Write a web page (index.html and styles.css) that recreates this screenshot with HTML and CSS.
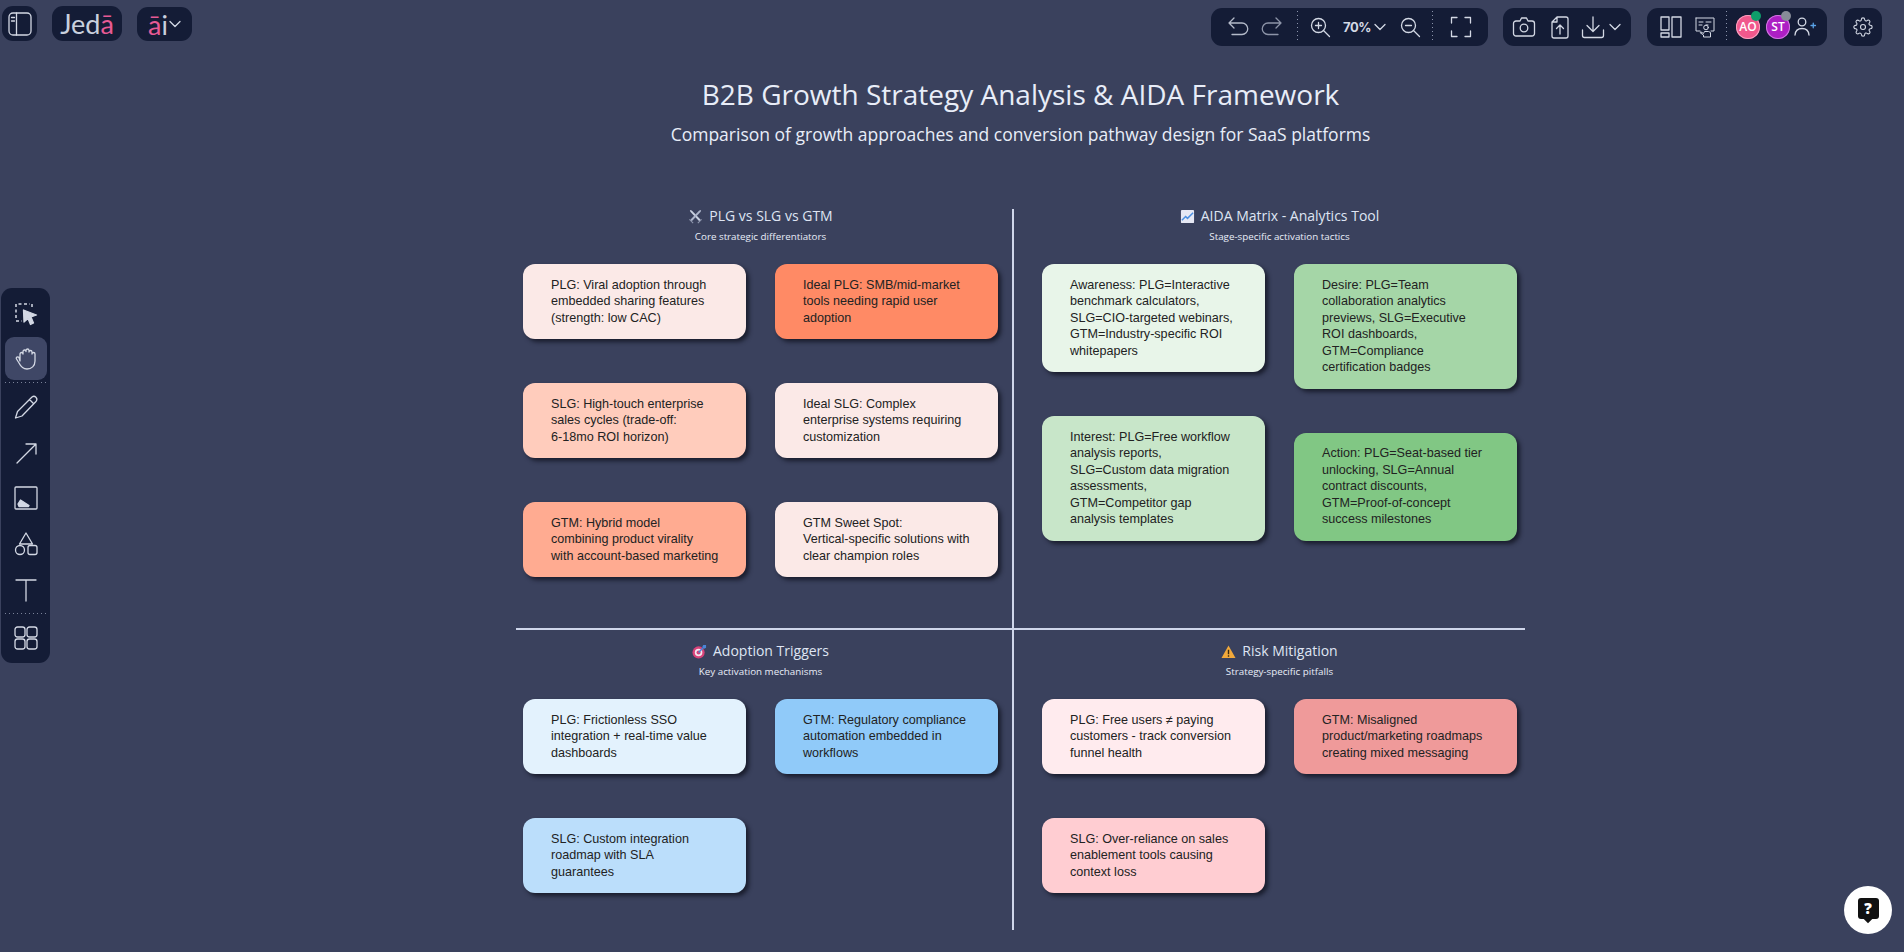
FILE: index.html
```html
<!DOCTYPE html>
<html lang="en">
<head>
<meta charset="utf-8">
<title>B2B Growth Strategy Analysis &amp; AIDA Framework</title>
<link rel="stylesheet" href="styles.css">
</head>
<body>
<svg class="defs" width="0" height="0" aria-hidden="true">
  <symbol id="chev" viewBox="0 0 14 14"><path d="M2 4.500 7 9.500 12 4.500"/></symbol>
</svg>

<header class="topbar">
  <div class="bar-left">
    <button class="panel sq">
      <svg class="icon ic-26" viewBox="0 0 26 26"><rect x="2" y="2" width="22" height="22" rx="4"/><path d="M9.500 2v22M4.500 6.500h3M4.500 10h3"/></svg>
    </button>
    <div class="panel logo">Jed<span class="pink">ā</span></div>
    <div class="panel logo-ai"><span class="pink">ā</span>i<svg class="icon chev" viewBox="0 0 14 14"><use href="#chev"/></svg></div>
  </div>
  <div class="bar-right">
    <div class="panel tools zoom-panel">
      <svg class="icon soft ml15" viewBox="0 0 24 24"><path d="M8 3 3 8l5 5M3 8h13a5 5 0 0 1 0 11.500H6"/></svg>
      <svg class="icon dim ml10" viewBox="0 0 24 24"><path d="M16 3l5 5-5 5M21 8H8a5 5 0 0 0 0 11.500h10"/></svg>
      <i class="vsep ml13"></i>
      <svg class="icon ml10" viewBox="0 0 24 24"><circle cx="10.500" cy="10.500" r="7"/><path d="M15.500 15.500l6 6M10.500 7.500v6M7.500 10.500h6"/></svg>
      <span class="zoom-val">70%</span>
      <svg class="icon chev ml4" viewBox="0 0 14 14"><use href="#chev"/></svg>
      <svg class="icon ml11" viewBox="0 0 24 24"><circle cx="10.500" cy="10.500" r="7"/><path d="M15.500 15.500l6 6M7.500 10.500h6"/></svg>
      <i class="vsep ml10"></i>
      <svg class="icon ml16" viewBox="0 0 24 24"><path d="M8 2.500H2.500V8M16 2.500h5.500V8M2.500 16v5.500H8M21.500 16v5.500H16"/></svg>
    </div>
    <div class="panel tools">
      <svg class="icon ml9" viewBox="0 0 24 24"><path d="M8 6l1.500-3h5L16 6h4a2.500 2.500 0 0 1 2.500 2.500v10A2.500 2.500 0 0 1 20 21H4a2.500 2.500 0 0 1-2.500-2.500v-10A2.500 2.500 0 0 1 4 6z"/><circle cx="12" cy="13" r="3.800"/></svg>
      <svg class="icon ml12" viewBox="0 0 24 24"><path d="M9 2h9a2 2 0 0 1 2 2v17a2 2 0 0 1-2 2H6a2 2 0 0 1-2-2V7zM9 2v5H4M12 19v-9M8.500 13.500 12 10l3.500 3.500"/></svg>
      <svg class="icon ml9" viewBox="0 0 24 24"><path d="M12 2v14M6 10.500l6 6 6-6M1.500 15v5.500a2 2 0 0 0 2 2h17a2 2 0 0 0 2-2V15"/></svg>
      <svg class="icon chev ml3" viewBox="0 0 14 14"><use href="#chev"/></svg>
    </div>
    <div class="panel tools">
      <svg class="icon ml12" viewBox="0 0 24 24"><rect x="2" y="2" width="8" height="13"/><rect x="2" y="18" width="8" height="4"/><rect x="13" y="2" width="9" height="20"/></svg>
      <svg class="icon thin ml10" viewBox="0 0 24 24"><path d="M3 3h18v13h-3M3 3v13h4M6 7h4M6 10h3M13 7h5M13 10h2"/><circle cx="13" cy="12.500" r="2.300"/><path d="M8 17l2.500 1.500 1-2h4l2 1V22h-7v-2l-3-2z"/></svg>
      <i class="vsep ml9"></i>
      <span class="avatar av-pink ml9">AO<b class="dot dot-green"></b></span>
      <span class="avatar av-purple ml6">ST<b class="dot dot-grey"></b></span>
      <svg class="icon ml3" viewBox="0 0 24 24"><circle cx="9" cy="7" r="3.800"/><path d="M2 20c.4-4.500 3.200-6.500 7-6.500s6.600 2 7 6.500"/><path class="blue" d="M18 10.500h4.500M20.250 8.250v4.500"/></svg>
    </div>
    <div class="panel tools gear-panel">
      <svg class="icon" viewBox="0 0 24 24"><circle cx="12" cy="12" r="3"/><path d="M19.400 15a1.650 1.650 0 0 0 .33 1.820l.06.06a2 2 0 0 1 0 2.830 2 2 0 0 1-2.830 0l-.06-.06a1.650 1.650 0 0 0-1.820-.33 1.650 1.650 0 0 0-1 1.510V21a2 2 0 0 1-2 2 2 2 0 0 1-2-2v-.09A1.650 1.650 0 0 0 9 19.400a1.650 1.650 0 0 0-1.820.33l-.06.06a2 2 0 0 1-2.830 0 2 2 0 0 1 0-2.830l.06-.06a1.650 1.650 0 0 0 .33-1.820 1.650 1.650 0 0 0-1.510-1H3a2 2 0 0 1-2-2 2 2 0 0 1 2-2h.09A1.650 1.650 0 0 0 4.600 9a1.650 1.650 0 0 0-.33-1.820l-.06-.06a2 2 0 0 1 0-2.830 2 2 0 0 1 2.830 0l.06.06a1.650 1.650 0 0 0 1.820.33H9a1.650 1.650 0 0 0 1-1.510V3a2 2 0 0 1 2-2 2 2 0 0 1 2 2v.09a1.650 1.650 0 0 0 1 1.510 1.650 1.650 0 0 0 1.820-.33l.06-.06a2 2 0 0 1 2.830 0 2 2 0 0 1 0 2.830l-.06.06a1.650 1.650 0 0 0-.33 1.820V9a1.650 1.650 0 0 0 1.510 1H21a2 2 0 0 1 2 2 2 2 0 0 1-2 2h-.09a1.650 1.650 0 0 0-1.510 1z"/></svg>
    </div>
  </div>
</header>

<nav class="sidebar">
  <button class="tool"><svg class="icon ic-26" viewBox="0 0 26 26"><path class="dash" d="M3 18V4h14M3 21h6"/><path class="dash" d="M19 4v3"/><path class="fill" d="M10.500 10l13 5-5.500 2 2.500 6-3 1.500-2.500-6-4 3.500z"/></svg></button>
  <button class="tool active"><svg class="icon ic-26" viewBox="0 0 26 26"><path d="M7 16V9a1.500 1.500 0 0 1 3 0V6.500a1.500 1.500 0 0 1 3 0V5.500a1.500 1.500 0 0 1 3 0V7a1.500 1.500 0 0 1 3 0v2a1.500 1.500 0 0 1 3 0v7c0 5-3.500 8-8 8-4 0-6-2-8-6l-2.500-4c-1-1.500 1.300-3 2.500-1.500z"/></svg></button>
  <i class="hsep"></i>
  <button class="tool"><svg class="icon ic-26" viewBox="0 0 26 26"><path d="M19 3a3 3 0 0 1 4.200 4.200L9 22l-6.500 2L4.500 17.500zM16.500 5.500l4.200 4.200"/></svg></button>
  <button class="tool"><svg class="icon ic-26" viewBox="0 0 26 26"><path d="M4 23 23 4M13 4h10v10"/></svg></button>
  <button class="tool"><svg class="icon ic-26" viewBox="0 0 26 26"><rect x="2" y="2" width="22" height="22" rx="1"/><path class="fill" d="M5 19l2.500-4 8.500 5.500-.5 1H6z"/></svg></button>
  <button class="tool"><svg class="icon ic-26" viewBox="0 0 26 26"><path d="M13 2l6.500 11h-13z"/><circle cx="7" cy="19" r="4.500"/><rect x="15" y="14.500" width="9" height="9" rx="2"/></svg></button>
  <button class="tool"><svg class="icon ic-26" viewBox="0 0 26 26"><path d="M3 4h20M13 4v21"/></svg></button>
  <i class="hsep"></i>
  <button class="tool"><svg class="icon ic-26" viewBox="0 0 26 26"><rect x="2" y="2" width="10" height="10" rx="2.500"/><rect x="14" y="2" width="10" height="10" rx="2.500"/><rect x="2" y="14" width="10" height="10" rx="2.500"/><rect x="14" y="14" width="10" height="10" rx="2.500"/></svg></button>
</nav>

<main class="diagram">
  <h1 class="title">B2B Growth Strategy Analysis &amp; AIDA Framework</h1>
  <p class="subtitle">Comparison of growth approaches and conversion pathway design for SaaS platforms</p>

  <div class="board">
    <section class="quad q-tl">
      <h2 class="q-title">
        <svg class="emoji" viewBox="0 0 16 16"><path d="M2 1l2 .5 9.500 10-1.500 1.500L2.500 3z" fill="#c9d0e0"/><path d="M14 1l-2 .5-9.500 10L4 13l9.500-10z" fill="#aeb6cc"/><path d="M1.500 11l4 4M14.500 11l-4 4" stroke="#8d95ad" stroke-width="1.200"/></svg>
        PLG vs SLG vs GTM</h2>
      <p class="q-sub">Core strategic differentiators</p>
      <div class="cols">
        <div class="col">
          <div class="card c-or1">PLG: Viral adoption through<br>embedded sharing features<br>(strength: low CAC)</div>
          <div class="card c-or3">SLG: High-touch enterprise<br>sales cycles (trade-off:<br>6-18mo ROI horizon)</div>
          <div class="card c-or4">GTM: Hybrid model<br>combining product virality<br>with account-based marketing</div>
        </div>
        <div class="col">
          <div class="card c-or5">Ideal PLG: SMB/mid-market<br>tools needing rapid user<br>adoption</div>
          <div class="card c-or1">Ideal SLG: Complex<br>enterprise systems requiring<br>customization</div>
          <div class="card c-or1">GTM Sweet Spot:<br>Vertical-specific solutions with<br>clear champion roles</div>
        </div>
      </div>
    </section>

    <section class="quad q-tr">
      <h2 class="q-title">
        <svg class="emoji" viewBox="0 0 16 16"><rect x="1" y="1" width="14" height="14" rx="1" fill="#e6e8f4"/><path d="M2 12l4-4 2 2 6-6" fill="none" stroke="#4c8fe0" stroke-width="1.600"/></svg>
        AIDA Matrix - Analytics Tool</h2>
      <p class="q-sub">Stage-specific activation tactics</p>
      <div class="cols">
        <div class="col">
          <div class="card c-g1">Awareness: PLG=Interactive<br>benchmark calculators,<br>SLG=CIO-targeted webinars,<br>GTM=Industry-specific ROI<br>whitepapers</div>
          <div class="card c-g2">Interest: PLG=Free workflow<br>analysis reports,<br>SLG=Custom data migration<br>assessments,<br>GTM=Competitor gap<br>analysis templates</div>
        </div>
        <div class="col">
          <div class="card c-g3">Desire: PLG=Team<br>collaboration analytics<br>previews, SLG=Executive<br>ROI dashboards,<br>GTM=Compliance<br>certification badges</div>
          <div class="card c-g4">Action: PLG=Seat-based tier<br>unlocking, SLG=Annual<br>contract discounts,<br>GTM=Proof-of-concept<br>success milestones</div>
        </div>
      </div>
    </section>

    <section class="quad q-bl">
      <h2 class="q-title">
        <svg class="emoji" viewBox="0 0 16 16"><circle cx="7" cy="9" r="6.500" fill="#d9437a"/><circle cx="7" cy="9" r="4" fill="#f3e6ee"/><circle cx="7" cy="9" r="2.200" fill="#d9437a"/><path d="M7 9l6-6" stroke="#4a86d8" stroke-width="1.600"/><path d="M12 1h3v3l-2 1-2-2z" fill="#4a86d8"/></svg>
        Adoption Triggers</h2>
      <p class="q-sub">Key activation mechanisms</p>
      <div class="cols">
        <div class="col">
          <div class="card c-b1">PLG: Frictionless SSO<br>integration + real-time value<br>dashboards</div>
          <div class="card c-b2">SLG: Custom integration<br>roadmap with SLA<br>guarantees</div>
        </div>
        <div class="col">
          <div class="card c-b3">GTM: Regulatory compliance<br>automation embedded in<br>workflows</div>
        </div>
      </div>
    </section>

    <section class="quad q-br">
      <h2 class="q-title">
        <svg class="emoji" viewBox="0 0 16 16"><path d="M8 1.500 15.500 15H.5z" fill="#f2a93b"/><path d="M8 6v5M8 12v1.500" stroke="#3a2a10" stroke-width="1.500"/></svg>
        Risk Mitigation</h2>
      <p class="q-sub">Strategy-specific pitfalls</p>
      <div class="cols">
        <div class="col">
          <div class="card c-r1">PLG: Free users ≠ paying<br>customers - track conversion<br>funnel health</div>
          <div class="card c-r2">SLG: Over-reliance on sales<br>enablement tools causing<br>context loss</div>
        </div>
        <div class="col">
          <div class="card c-r3">GTM: Misaligned<br>product/marketing roadmaps<br>creating mixed messaging</div>
        </div>
      </div>
    </section>
  </div>
</main>

<button class="help" aria-label="Help">
  <span class="help-bubble">?</span>
</button>
</body>
</html>
```
FILE: styles.css
```css
* { box-sizing: border-box; }
html, body { margin: 0; height: 100%; }
body {
  position: relative;
  width: 1904px;
  height: 952px;
  overflow: hidden;
  background: #3a415d;
  font-family: "Open Sans", sans-serif;
  color: #e8edf8;
}
button { border: 0; padding: 0; background: none; color: inherit; font: inherit; }
.defs { position: absolute; }

/* top bar */
.topbar {
  display: flex;
  justify-content: space-between;
  align-items: flex-start;
  height: 54px;
  padding: 6px 22px 0 2px;
}
.bar-left { display: flex; gap: 15px; align-items: flex-start; }
.bar-right { display: flex; gap: 16px; padding-top: 2px; }
.panel {
  display: flex;
  align-items: center;
  height: 35px;
  background: #141c36;
  border-radius: 11px;
}
.sq { width: 35px; justify-content: center; }
.logo {
  width: 70px;
  justify-content: center;
  font: 400 27px/1 Lato, sans-serif;
  color: #c9d0de;
}
.logo-ai {
  width: 55px;
  margin-top: 1px;
  height: 34px;
  padding-left: 11px;
  font: 400 27px/1 Lato, sans-serif;
  color: #c9d0de;
}
.pink { color: #e75a95; }
.tools { height: 38px; }
.zoom-panel { margin-right: -1px; }
.gear-panel { width: 38px; justify-content: center; margin-left: 1px; }

.icon {
  flex: none;
  width: 24px;
  height: 24px;
  fill: none;
  stroke: #d3d8e4;
  stroke-width: 1.300;
  stroke-linecap: round;
  stroke-linejoin: round;
}
.ic-26 { width: 26px; height: 26px; }
.chev { width: 14px; height: 14px; }
.soft { stroke: #b4bac9; }
.dim { stroke: #8d94a8; }
.thin { stroke-width: 1; }
.blue { stroke: #5aa3e8; }
.dash { stroke-dasharray: 3 2.500; stroke-width: 1.500; stroke-linecap: butt; }
.fill { fill: #d3d8e4; }
.gear-panel .icon { width: 20px; height: 20px; }

.ml3 { margin-left: 3px; }
.ml4 { margin-left: 4px; }
.ml6 { margin-left: 6px; }
.ml9 { margin-left: 9px; }
.ml10 { margin-left: 10px; }
.ml11 { margin-left: 11px; }
.ml12 { margin-left: 12px; }
.ml13 { margin-left: 13px; }
.ml15 { margin-left: 15px; }
.ml16 { margin-left: 16px; }

.vsep {
  flex: none;
  width: 1px;
  height: 32px;
  background: repeating-linear-gradient(180deg, #8b93ab 0 1px, transparent 1px 4px);
}
.tools > :last-child { margin-right: 9px; }
.tools:nth-child(3) > :last-child { margin-right: 10px; }
.tools.gear-panel > :last-child { margin-right: 0; }
.zoom-panel > :last-child { margin-right: 15px; }
.zoom-val {
  width: 26px;
  margin-left: 11px;
  font: 700 13px/1 Inter, sans-serif;
  letter-spacing: -.4px;
  color: #d3d8e4;
  white-space: nowrap;
}
.avatar {
  position: relative;
  flex: none;
  display: flex;
  align-items: center;
  justify-content: center;
  width: 24px;
  height: 24px;
  border-radius: 50%;
  font: 600 12px/1 "Open Sans", sans-serif;
  color: #fff;
}
.av-pink { background: #f0588c; box-shadow: inset 0 0 0 1px #f7a3c0; }
.av-purple { background: #ad1fc4; box-shadow: inset 0 0 0 1px #d07ae0; }
.dot {
  position: absolute;
  top: -4px;
  right: -1px;
  width: 10px;
  height: 10px;
  border-radius: 50%;
}
.dot-green { background: #0f9d6a; }
.dot-grey { background: #878c98; }

/* left tools */
.sidebar {
  position: absolute;
  left: 1px;
  top: 288px;
  width: 49px;
  height: 375px;
  padding-top: 3px;
  display: flex;
  flex-direction: column;
  align-items: center;
  gap: 2.500px;
  background: #141c36;
  border-radius: 11px;
}
.tool {
  flex: none;
  display: flex;
  align-items: center;
  justify-content: center;
  width: 42px;
  height: 43px;
  border-radius: 9px;
}
.tool.active { background: #3f4766; }
.hsep {
  flex: none;
  width: 42px;
  height: 1px;
  background: repeating-linear-gradient(90deg, #7a8299 0 1px, transparent 1px 4px);
}

/* diagram */
.diagram { width: 1009px; margin-left: 516px; }
.title {
  margin: 21px 0 0;
  font: 400 28px/38px "Open Sans", sans-serif;
  text-align: center;
  color: #e8edf8;
}
.subtitle {
  margin: 8px 0 0;
  font: 400 17.500px/26px "Open Sans", sans-serif;
  text-align: center;
  color: #e8edf8;
}
.board {
  margin-top: 62px;
  display: grid;
  grid-template-columns: 498px 511px;
  grid-template-rows: 419px 302px;
}
.quad { padding-left: 7px; padding-right: 14px; }
.q-tl, .q-bl { border-right: 2px solid #cfd6ea; }
.q-tr, .q-br { padding-left: 28px; padding-right: 8px; }
.q-bl, .q-br { border-top: 2px solid #cfd6ea; padding-top: 14px; }
.q-title {
  margin: 0;
  display: flex;
  justify-content: center;
  align-items: center;
  gap: 6px;
  height: 14px;
  font: 400 14px/14px "Open Sans", sans-serif;
  color: #dfe5f3;
}
.emoji { flex: none; width: 15px; height: 15px; }
.q-sub {
  margin: 8px 0 21px;
  font: 400 9.800px/12px "Open Sans", sans-serif;
  text-align: center;
  color: #e8edf8;
}
.cols { display: flex; gap: 29px; }
.col {
  flex: none;
  width: 223px;
  display: flex;
  flex-direction: column;
  gap: 44px;
}
.card {
  padding: 12.750px 8px 12.750px 28px;
  border-radius: 12px;
  font: 400 12.600px/16.500px "Liberation Sans", Arial, sans-serif;
  color: #222;
  white-space: nowrap;
  box-shadow: 3px 3px 4px rgba(18, 20, 34, .8);
}
.c-or1 { background: #fbe9e7; }
.c-or3 { background: #ffccbc; }
.c-or4 { background: #ffab91; }
.c-or5 { background: #ff8a65; }
.c-g1 { background: #e8f5e9; }
.c-g2 { background: #c8e6c9; }
.c-g3 { background: #a5d6a7; }
.c-g4 { background: #81c784; }
.c-b1 { background: #e3f2fd; }
.c-b2 { background: #bbdefb; }
.c-b3 { background: #90caf9; }
.c-r1 { background: #ffebee; }
.c-r2 { background: #ffcdd2; }
.c-r3 { background: #ef9a9a; }

/* help */
.help {
  position: absolute;
  left: 1844px;
  top: 886px;
  width: 48px;
  height: 48px;
  border-radius: 50%;
  background: #fff;
  display: flex;
  align-items: center;
  justify-content: center;
}
.help-bubble {
  position: relative;
  display: block;
  width: 21px;
  height: 21px;
  margin-bottom: 3px;
  background: #111;
  border-radius: 3px;
  color: #fff;
  font: 800 15px/20px "Open Sans", sans-serif;
  text-align: center;
}
.help-bubble::after {
  content: "";
  position: absolute;
  left: 7.500px;
  bottom: -3px;
  width: 6px;
  height: 6px;
  background: #111;
  transform: rotate(45deg);
}
```
